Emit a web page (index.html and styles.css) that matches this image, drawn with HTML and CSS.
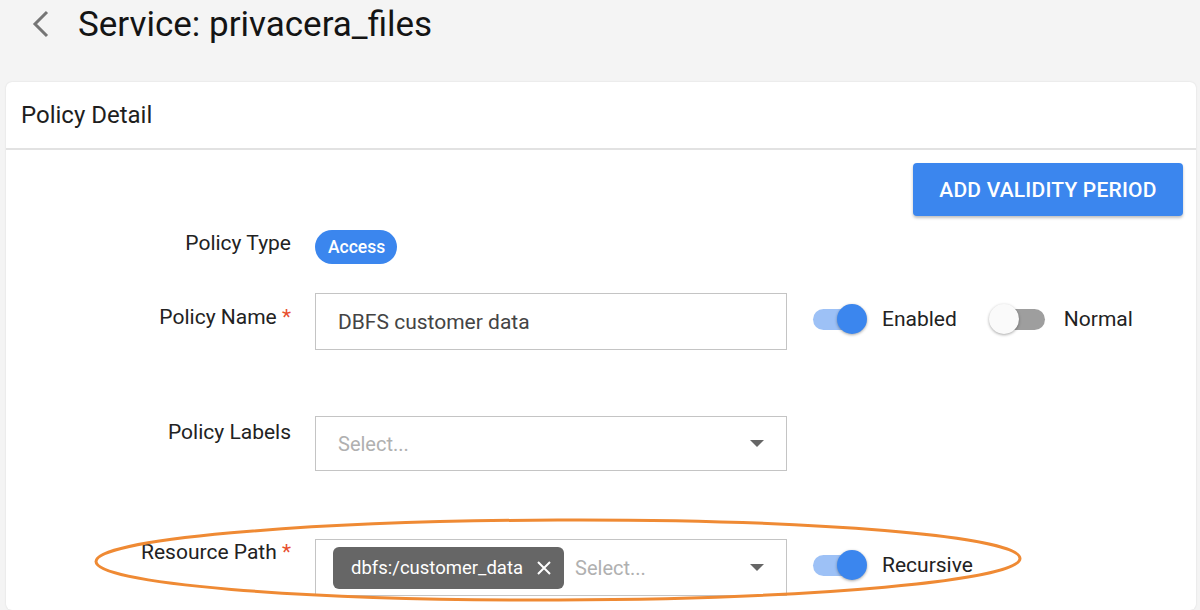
FILE: index.html
```html
<!DOCTYPE html>
<html>
<head>
<meta charset="utf-8">
<link rel="stylesheet" href="styles.css">
</head>
<body>
<header class="page-head">
  <svg class="back" width="20" height="28" viewBox="0 0 20 28"><path d="M16 2 L4 14 L16 26" fill="none" stroke="#757575" stroke-width="3"/></svg>
  <h1 class="title">Service: privacera_files</h1>
</header>
<section class="card">
  <div class="card-head">Policy Detail</div>
  <div class="card-body">
    <div class="actions"><button class="btn">ADD VALIDITY PERIOD</button></div>
    <div class="row row-type">
      <div class="label">Policy Type</div>
      <div class="ctrl"><span class="pill">Access</span></div>
    </div>
    <div class="row row-name">
      <div class="label">Policy Name <span class="req">*</span></div>
      <div class="ctrl"><div class="input">DBFS customer data</div></div>
      <div class="toggles">
        <label class="toggle on"><span class="track"><span class="thumb"></span></span><span class="tlabel">Enabled</span></label>
        <label class="toggle off"><span class="track"><span class="thumb"></span></span><span class="tlabel">Normal</span></label>
      </div>
    </div>
    <div class="row row-labels">
      <div class="label">Policy Labels</div>
      <div class="ctrl"><div class="select"><span class="ph">Select...</span><span class="caret"></span></div></div>
    </div>
    <div class="row row-res">
      <div class="label">Resource Path <span class="req">*</span></div>
      <div class="ctrl"><div class="select multi"><span class="chip">dbfs:/customer_data<svg class="x" width="14" height="14" viewBox="0 0 14 14"><path d="M1 1 L13 13 M13 1 L1 13" stroke="#fff" stroke-width="2"/></svg></span><span class="ph">Select...</span><span class="caret"></span></div></div>
      <div class="toggles">
        <label class="toggle on"><span class="track"><span class="thumb"></span></span><span class="tlabel">Recursive</span></label>
      </div>
    </div>
  </div>
</section>
<svg class="ring" width="1200" height="610" viewBox="0 0 1200 610"><ellipse cx="558" cy="560" rx="462" ry="40" fill="none" stroke="#ef8a34" stroke-width="3" transform="rotate(-0.2 558 560)"/></svg>
</body>
</html>
```
FILE: styles.css
```css
html, body { margin: 0; padding: 0; overflow: hidden; }
body {
  background: #f4f4f4;
  font-family: Roboto, "Liberation Sans", sans-serif;
  color: #222;
  width: 1200px;
  height: 610px;
  position: relative;
}
.page-head {
  display: flex;
  align-items: center;
  height: 50px;
  padding-left: 31px;
}
.back { margin-right: 27px; margin-top: -2px; }
.title {
  margin: 0;
  font-size: 35px;
  font-weight: 400;
  color: #141414;
  line-height: 50px;
}
.card {
  margin: 32px 4px 0 6px;
  background: #fff;
  border-radius: 6px;
  box-shadow: 0 0 2px rgba(0,0,0,0.12);
  height: 528px;
}
.card-head {
  height: 66px;
  line-height: 66px;
  padding-left: 15px;
  font-size: 24px;
  color: #1e1e1e;
  border-bottom: 2px solid #e2e2e2;
}
.card-body { padding: 13px 13px 0 15px; }
.actions { display: flex; justify-content: flex-end; }
.btn {
  background: #3b86ee;
  color: #fff;
  border: 0;
  border-radius: 4px;
  height: 53px;
  width: 270px;
  font-family: Roboto, "Liberation Sans", sans-serif;
  font-size: 21px;
  font-weight: 500;
  letter-spacing: 0.2px;
  box-shadow: 0 2px 3px rgba(0,0,0,0.25);
}
.row { display: flex; align-items: flex-start; }
.label {
  width: 270px;
  margin-right: 24px;
  text-align: right;
  font-size: 21px;
  line-height: 24px;
  color: #222;
}
.req { color: #e8502f; }
.ctrl { width: 472px; }
.row-type { margin-top: 14px; height: 34px; }
.row-type .label { padding-top: 1px; }
.row-name { margin-top: 29px; }
.row-name .label { padding-top: 12px; }
.row-labels { margin-top: 66px; }
.row-labels .label { padding-top: 4px; }
.row-res { margin-top: 68px; }
.row-res .label { padding-top: 1px; }
.pill {
  display: inline-block;
  height: 34px;
  line-height: 34px;
  padding: 0 12px 0 13px;
  border-radius: 17px;
  background: #3b86ee;
  color: #fff;
  font-size: 17.5px;
  font-weight: 500;
}
.input, .select {
  box-sizing: border-box;
  border: 1px solid #c4c4c4;
  height: 57px;
  padding-left: 22px;
  display: flex;
  align-items: center;
  font-size: 21px;
  color: #444;
}
.select { height: 55px; padding-right: 22px; }
.select.multi { height: 57px; padding-left: 17px; }
.ph { color: #b0b0b0; flex: 1; font-size: 20px; }
.caret {
  width: 0; height: 0;
  border-left: 7px solid transparent;
  border-right: 7px solid transparent;
  border-top: 7px solid #666;
}
.chip {
  display: inline-flex;
  align-items: center;
  height: 42px;
  padding: 0 13px 0 18px;
  background: #666;
  color: #fff;
  border-radius: 6px;
  font-size: 18.5px;
  margin-right: 11px;
}
.x { margin-left: 14px; }
.toggles { display: flex; align-items: center; margin-left: 26px; height: 52px; }
.toggle { display: flex; align-items: center; }
.track {
  position: relative;
  width: 53px;
  height: 21px;
  border-radius: 11px;
  display: block;
}
.thumb {
  position: absolute;
  top: -5px;
  width: 30px;
  height: 30px;
  border-radius: 50%;
  box-shadow: 0 1px 3px rgba(0,0,0,0.35);
}
.toggle.on .track { background: #9dc1f6; }
.toggle.on .thumb { background: #3b86ee; left: 24px; }
.toggle.off { margin-left: 35px; }
.toggle.off .track { background: #9e9e9e; }
.toggle.off .thumb { background: #fafafa; left: -3px; }
.tlabel { margin-left: 16px; font-size: 21px; color: #222; }
.toggle.off .tlabel { margin-left: 19px; }
.ring { position: absolute; left: 0; top: 0; pointer-events: none; }
```
